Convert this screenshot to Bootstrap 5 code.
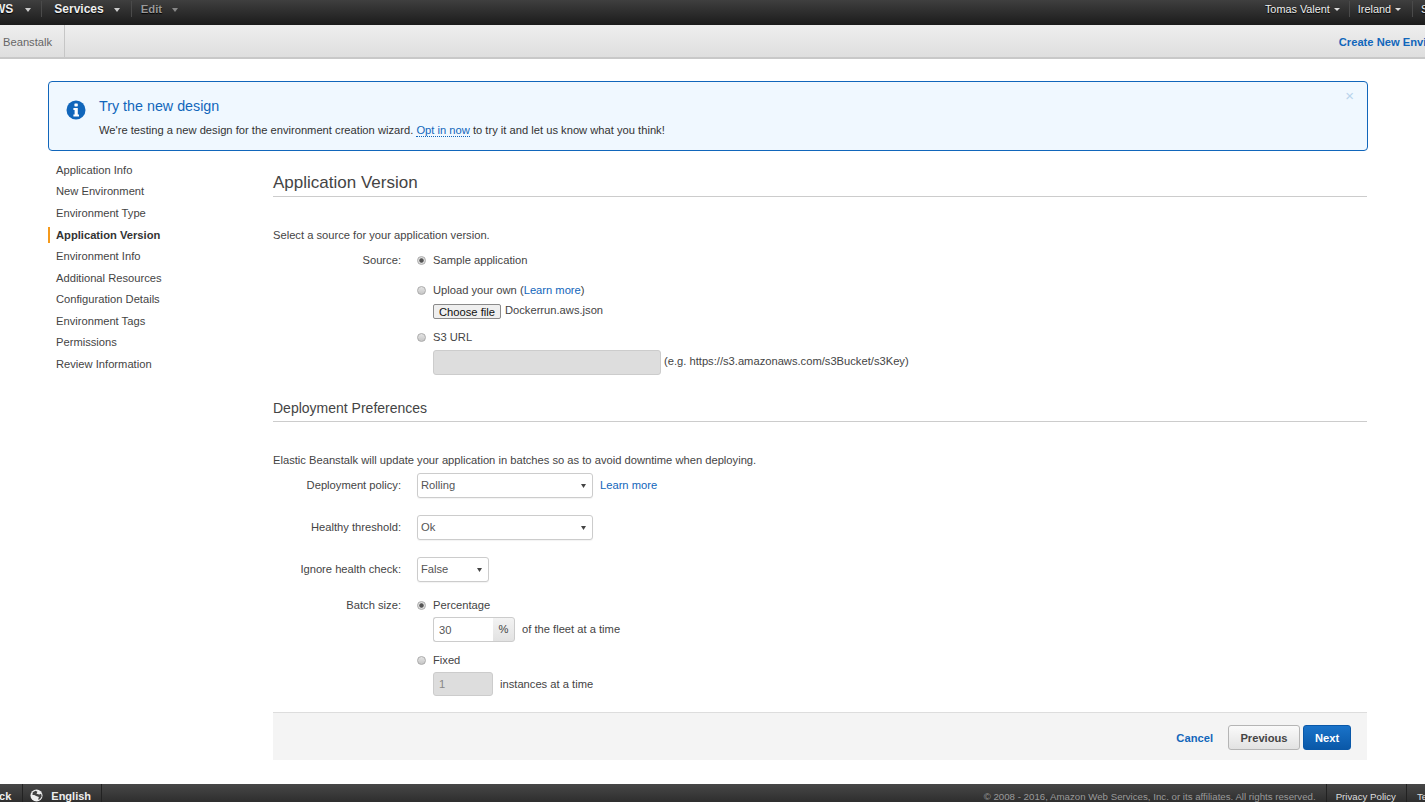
<!DOCTYPE html>
<html lang="en">
<head>
<meta charset="utf-8">
<title>Elastic Beanstalk</title>
<link href="https://cdn.jsdelivr.net/npm/bootstrap@5.3.0/dist/css/bootstrap.min.css" rel="stylesheet">
<style>
html,body{height:100%;}
body{font-family:"Liberation Sans",Arial,sans-serif;font-size:11.18px;color:#444;background:#fff;overflow:hidden;line-height:15px;}
a{text-decoration:none;color:#1166bb;}
.eb-shell{height:802px;width:1425px;overflow:hidden;}
.eb-top{height:25px;flex:none;background:linear-gradient(#3f3f3f,#1b1b1b);color:#fff;white-space:nowrap;font-size:12px;overflow:hidden;}
.eb-top-left{margin-left:-14px;}
.eb-top-item{height:16px;margin-top:1px;display:flex;align-items:center;padding:0 9px 0 12px;border-right:1px solid #4a4a4a;font-weight:700;color:#eee;line-height:16px;text-shadow:0 1px 1px #000;}
.eb-top-item.eb-aws{padding:0 10px 0 0;}
.eb-top-item.eb-aws .eb-caret{margin-left:12px;}
.eb-top-item.eb-svc{padding:0 11px 0 12px;}
.eb-top-item.eb-dim{color:#999;border:0;padding-left:9px;font-size:11.3px;}
.eb-caret{width:0;height:0;border-left:3.5px solid transparent;border-right:3.5px solid transparent;border-top:4px solid #ccc;margin-left:10px;margin-top:1px;}
.eb-dim .eb-caret{border-top-color:#888;}
.eb-top-right{margin-left:auto;margin-right:-43px;}
.eb-top-right .eb-top-item{font-weight:400;font-size:10.85px;padding:0 9px 0 8px;}
.eb-top-right .eb-top-item.eb-region{padding-right:11px;}
.eb-top-right .eb-caret{margin-left:4px;border-left-width:3px;border-right-width:3px;border-top-width:3px;border-top-color:#ddd;}
.eb-top-right .eb-top-item.eb-last{border:0;}
.eb-sub{height:34px;flex:none;background:linear-gradient(#eee,#dedede);border-bottom:2px solid #c8c8c8;white-space:nowrap;overflow:hidden;}
.eb-crumb{width:65px;border-right:1px solid #c6c6c6;padding-left:3px;color:#666;line-height:34px;}
.eb-create{margin-left:auto;margin-right:-46px;color:#1166bb;font-weight:700;line-height:34px;}
.eb-main{flex:1 1 auto;padding:22px 57px 0 48px;min-height:0;}
.eb-note{height:70px;margin:0;padding:0;border:1px solid #1166bb;border-radius:4px;background:#f0f8ff;color:#333;}
.eb-note-icon{flex:none;margin:18px 13.5px 0 16.5px;}
.eb-note-title{font-size:14.3px;line-height:18px;color:#1166bb;margin:15px 0 8px;font-weight:400;}
.eb-note a{border-bottom:1px dotted #1166bb;}
.eb-close{position:absolute;top:6px;right:13px;color:#b8d4ec;font-size:15px;line-height:16px;}
.eb-side{width:225px;flex:none;padding-top:8.8px;}
.eb-side .nav-link{padding:3px 0 0 6px;color:#444;line-height:15px;height:21.55px;border-left:2.5px solid transparent;margin:0;}
.eb-side .nav-link.active{font-weight:700;color:#333;border-left-color:#f59a1c;height:16px;padding-top:.5px;margin:3px 0 2.55px;}
.eb-form{flex:1 1 auto;min-width:0;padding-right:1px;}
.eb-h1{font-size:17px;line-height:22px;font-weight:400;color:#444;margin:21px 0 0;padding-bottom:3px;border-bottom:1px solid #ccc;height:25px;}
.eb-h2{font-size:14px;line-height:18px;font-weight:400;color:#444;margin:0;padding-bottom:4px;border-bottom:1px solid #ccc;height:23px;}
.eb-lab{width:128px;flex:none;text-align:right;margin-right:16px;}
.eb-rad{appearance:none;-webkit-appearance:none;width:9px;height:9px;margin:0 7px 0 0;flex:none;border:1px solid #aaa;border-radius:50%;background:linear-gradient(#e4e4e4,#c6c6c6);}
.eb-rad:checked{background:radial-gradient(circle,#555 0,#555 1.8px,#dedede 2.6px);}
.eb-rowline{display:flex;align-items:center;}
.eb-ind{margin-left:160px;}
.eb-file{font:11.2px "Liberation Sans",Arial,sans-serif;color:#111;background:#efefef;border:1px solid #8a8a8a;border-radius:2px;padding:1px 5px 0;height:15px;line-height:12px;position:relative;top:1px;}
.eb-input.form-control{height:25px;min-height:0;padding:2px 5px;font-size:11.18px;line-height:15px;border:1px solid #ccc;border-radius:3px;color:#555;box-shadow:none;}
.eb-input.form-control:disabled{background:#ddd;color:#888;}
.eb-sel.form-select{height:25px;width:176px;padding:2px 3px;font-size:11.18px;line-height:15px;color:#555;border:1px solid #ccc;border-radius:3px;background-color:#fff;background-image:url("data:image/svg+xml,%3Csvg xmlns='http://www.w3.org/2000/svg' width='5' height='4'%3E%3Cpolygon points='0,0 5,0 2.5,4' fill='%23444'/%3E%3C/svg%3E");background-size:5px 4px;background-position:right 6px center;background-repeat:no-repeat;box-shadow:0 1px 1px rgba(0,0,0,.05);}
.eb-pct{height:25px;width:82px;flex-wrap:nowrap;}
.eb-pct .input-group-text{width:23px;padding:0;justify-content:center;font-size:11.18px;border:1px solid #ccc;border-radius:0 3px 3px 0;background:linear-gradient(#f3f3f3,#e2e2e2);color:#444;}
.eb-gap3{margin-left:3px;}
.eb-gap7{margin-left:7px;}
.eb-up1{position:relative;top:-1px;}
.eb-actions{height:48px;margin-top:16px;background:#f4f4f4;border-top:1px solid #ddd;padding:2px 16px 0 0;gap:0;}
.eb-actions .eb-link{font-weight:700;color:#1166bb;margin-right:15px;margin-top:1px;}
.eb-btn.btn{height:25px;padding:1px 0 0;font-size:11.18px;font-weight:700;line-height:22px;border-radius:3px;}
.eb-prev.btn{width:72px;margin-right:3px;background:linear-gradient(#fafafa,#e2e2e2);border:1px solid #b5b5b5;color:#444;}
.eb-next.btn{width:48px;background:linear-gradient(#1a73c9,#0a58a8);border:1px solid #0a58a8;color:#fff;}
.eb-foot{height:18px;flex:none;background:linear-gradient(#474747,#2e2e2e);color:#eee;white-space:nowrap;overflow:hidden;font-size:11px;position:relative;}
.eb-foot-l{margin-left:-25px;font-weight:700;}
.eb-foot-cell{height:18px;display:flex;align-items:center;padding-top:6px;border-right:1px solid #222;}
.eb-foot-copy{margin-left:auto;color:#9a9a9a;font-size:9.7px;padding-top:6px;padding-right:10px;line-height:13px;}
.eb-foot-r{margin-right:-59px;}
.eb-foot-r .eb-foot-cell{border:0;border-left:1px solid #222;font-size:9.7px;color:#ddd;}
.eb-globe{margin:-1px 8px 0 0;flex:none;}
</style>
</head>
<body>
<div class="eb-shell d-flex flex-column">
  <header class="eb-top d-flex">
    <div class="d-flex eb-top-left">
      <div class="eb-top-item eb-aws">AWS<span class="eb-caret"></span></div>
      <div class="eb-top-item eb-svc">Services<span class="eb-caret"></span></div>
      <div class="eb-top-item eb-dim">Edit<span class="eb-caret"></span></div>
    </div>
    <div class="d-flex eb-top-right">
      <div class="eb-top-item">Tomas Valent<span class="eb-caret"></span></div>
      <div class="eb-top-item eb-region">Ireland<span class="eb-caret"></span></div>
      <div class="eb-top-item eb-last">Support</div>
    </div>
  </header>
  <div class="eb-sub d-flex">
    <div class="eb-crumb">Beanstalk</div>
    <a class="eb-create" href="#">Create New Environment</a>
  </div>
  <main class="eb-main">
    <div class="alert eb-note d-flex position-relative" role="alert">
      <svg class="eb-note-icon" width="20" height="20" viewBox="0 0 20 20"><circle cx="10" cy="10" r="9.5" fill="#1166bb"/><rect x="8.4" y="3.4" width="3.4" height="3" rx=".6" fill="#fff"/><path d="M7.4 8h4.4v6.4h1.2v2H7.4v-2h1.2V10H7.4z" fill="#fff"/></svg>
      <div>
        <div class="eb-note-title">Try the new design</div>
        <div>We're testing a new design for the environment creation wizard. <a href="#">Opt in now</a> to try it and let us know what you think!</div>
      </div>
      <span class="eb-close">&#215;</span>
    </div>
    <div class="d-flex">
      <nav class="eb-side nav flex-column">
        <a class="nav-link" href="#">Application Info</a>
        <a class="nav-link" href="#">New Environment</a>
        <a class="nav-link" href="#">Environment Type</a>
        <a class="nav-link active" href="#">Application Version</a>
        <a class="nav-link" href="#">Environment Info</a>
        <a class="nav-link" href="#">Additional Resources</a>
        <a class="nav-link" href="#">Configuration Details</a>
        <a class="nav-link" href="#">Environment Tags</a>
        <a class="nav-link" href="#">Permissions</a>
        <a class="nav-link" href="#">Review Information</a>
      </nav>
      <form class="eb-form">
        <h2 class="eb-h1">Application Version</h2>
        <div style="margin-top:31px">Select a source for your application version.</div>
        <div class="eb-rowline" style="margin-top:10px"><span class="eb-lab">Source:</span><input class="eb-rad" type="radio" name="s" checked><span>Sample application</span></div>
        <div class="eb-rowline eb-ind" style="margin-top:15px;margin-left:144px"><input class="eb-rad" type="radio" name="s"><span>Upload your own (<a href="#">Learn more</a>)</span></div>
        <div class="d-flex align-items-center eb-ind" style="margin-top:5px"><button type="button" class="eb-file">Choose file</button><span class="ms-1">Dockerrun.aws.json</span></div>
        <div class="eb-rowline" style="margin-top:12px;margin-left:144px"><input class="eb-rad" type="radio" name="s"><span>S3 URL</span></div>
        <div class="d-flex align-items-center eb-ind" style="margin-top:5px"><input class="form-control eb-input" type="text" disabled style="width:228px"><span class="eb-gap3 eb-up1">(e.g. https://s3.amazonaws.com/s3Bucket/s3Key)</span></div>
        <h3 class="eb-h2" style="margin-top:24px">Deployment Preferences</h3>
        <div style="margin-top:31px">Elastic Beanstalk will update your application in batches so as to avoid downtime when deploying.</div>
        <div class="eb-rowline" style="margin-top:5px"><span class="eb-lab">Deployment policy:</span><select class="form-select eb-sel"><option>Rolling</option></select><a class="eb-gap7" href="#">Learn more</a></div>
        <div class="eb-rowline" style="margin-top:17px"><span class="eb-lab">Healthy threshold:</span><select class="form-select eb-sel"><option>Ok</option></select></div>
        <div class="eb-rowline" style="margin-top:17px"><span class="eb-lab">Ignore health check:</span><select class="form-select eb-sel" style="width:72px"><option>False</option></select></div>
        <div class="eb-rowline" style="margin-top:16px"><span class="eb-lab">Batch size:</span><input class="eb-rad" type="radio" name="b" checked><span>Percentage</span></div>
        <div class="d-flex align-items-center eb-ind" style="margin-top:4px"><div class="input-group eb-pct"><input class="form-control eb-input" type="text" value="30" style="border-radius:3px 0 0 3px;border-right:0"><span class="input-group-text">%</span></div><span class="eb-gap7">of the fleet at a time</span></div>
        <div class="eb-rowline" style="margin-top:11px;margin-left:144px"><input class="eb-rad" type="radio" name="b"><span>Fixed</span></div>
        <div class="d-flex align-items-center eb-ind" style="margin-top:4px"><input class="form-control eb-input" type="text" value="1" disabled style="width:60px;height:24px"><span class="eb-gap7">instances at a time</span></div>
        <div class="eb-actions d-flex justify-content-end align-items-center">
          <a class="eb-link" href="#">Cancel</a>
          <button type="button" class="btn eb-btn eb-prev">Previous</button>
          <button type="button" class="btn eb-btn eb-next">Next</button>
        </div>
      </form>
    </div>
  </main>
  <footer class="eb-foot d-flex">
    <div class="d-flex eb-foot-l">
      <div class="eb-foot-cell" style="padding-left:10px;padding-right:11px">Back</div>
      <div class="eb-foot-cell" style="padding-left:7px;padding-right:10px">
        <svg class="eb-globe" width="13" height="13" viewBox="0 0 14 14"><circle cx="7" cy="7" r="6.5" fill="#eee"/><path d="M3 3.5l3-1.5 2 1-1 2 3 1 2-1 .6 3-2 3-2 .5 1-3-3-1-2-1-2 0z" fill="#444"/></svg>English
      </div>
    </div>
    <div class="eb-foot-copy">© 2008 - 2016, Amazon Web Services, Inc. or its affiliates. All rights reserved.</div>
    <div class="d-flex eb-foot-r">
      <div class="eb-foot-cell" style="padding-left:9px;padding-right:10px">Privacy Policy</div>
      <div class="eb-foot-cell" style="padding-left:10px;padding-right:10px">Terms of Use</div>
    </div>
  </footer>
</div>
<script src="https://cdn.jsdelivr.net/npm/bootstrap@5.3.0/dist/js/bootstrap.bundle.min.js"></script>
</body>
</html>
